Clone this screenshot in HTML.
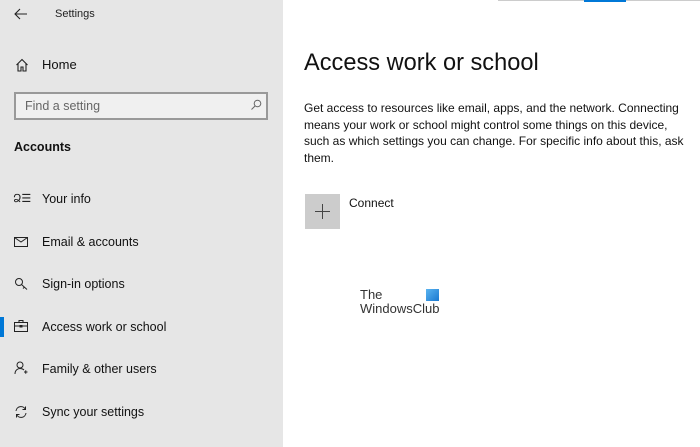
<!DOCTYPE html>
<html><head><style>
body{margin:0;width:700px;height:447px;overflow:hidden;background:#fff;font-family:"Liberation Sans",sans-serif;color:#000;position:relative}
.side{position:absolute;left:0;top:0;width:283px;height:447px;background:#e6e6e6}
.t{position:absolute;white-space:nowrap}
.it{position:absolute;left:42px;font-size:12.5px;color:#111}
svg{position:absolute}
</style></head><body>
<div class="side">
<svg style="left:14px;top:8px" width="14" height="12" viewBox="0 0 14 12"><path d="M13 6H1M6 1L1 6l5 5" fill="none" stroke="#222" stroke-width="1.1"/></svg>
<div class="t" style="left:55px;top:8px;font-size:11px;color:#222">Settings</div>
<svg style="left:15px;top:58px" width="14" height="14" viewBox="0 0 14 14"><path d="M1.5 7L7 1.5 12.5 7M3 5.5V13h3V9h2v4h3V5.5" fill="none" stroke="#222" stroke-width="1.1"/></svg>
<div class="it" style="top:57px;font-size:13px">Home</div>
<div style="position:absolute;left:14px;top:92px;width:250px;height:24px;border:2px solid #999;background:#f0f0f0"></div>
<div class="t" style="left:25px;top:99px;font-size:12.5px;color:#666">Find a setting</div>
<svg style="left:250px;top:99px" width="12" height="12" viewBox="0 0 12 12"><circle cx="7.5" cy="4.5" r="3.3" fill="none" stroke="#666"/><path d="M5 7L1.5 10.5" stroke="#666"/></svg>
<div class="t" style="left:14px;top:140px;font-size:12.5px;font-weight:bold;color:#111">Accounts</div>
<div class="t" style="left:13px;top:192px;font-size:11px;color:#222">Ձ☰</div>
<div class="it" style="top:192px">Your info</div>
<svg style="left:14px;top:237px" width="14" height="10" viewBox="0 0 14 10"><rect x=".5" y=".5" width="13" height="9" fill="none" stroke="#222"/><path d="M.5 .5L7 5l6.5-4.5" fill="none" stroke="#222"/></svg>
<div class="it" style="top:235px">Email &amp; accounts</div>
<svg style="left:14px;top:277px" width="14" height="14" viewBox="0 0 14 14"><circle cx="5" cy="5" r="3.5" fill="none" stroke="#222"/><path d="M7.5 7.5L13 12.5M10.5 10l-1.5 1.5" fill="none" stroke="#222"/></svg>
<div class="it" style="top:277px">Sign-in options</div>
<div style="position:absolute;left:0;top:317px;width:4px;height:20px;background:#0078d7"></div>
<svg style="left:14px;top:320px" width="14" height="12" viewBox="0 0 14 12"><rect x=".5" y="2.5" width="13" height="9" fill="none" stroke="#222"/><path d="M5 2.5V.5h4v2M.5 6h13M6 5.5h2v1.5H6z" fill="none" stroke="#222"/></svg>
<div class="it" style="top:320px">Access work or school</div>
<svg style="left:14px;top:361px" width="14" height="14" viewBox="0 0 14 14"><circle cx="6" cy="4" r="3" fill="none" stroke="#222"/><path d="M1 13c0-4 3-5.5 5-5.5s3 .5 4 1.5M10 11h3.5M11.75 9.3v3.5" fill="none" stroke="#222"/></svg>
<div class="it" style="top:362px">Family &amp; other users</div>
<svg style="left:14px;top:405px" width="14" height="14" viewBox="0 0 14 14"><path d="M2 6a5 5 0 0 1 9.5-1.5M12 8a5 5 0 0 1-9.5 1.5M11.5 1.5v3h-3M2.5 12.5v-3h3" fill="none" stroke="#222"/></svg>
<div class="it" style="top:405px">Sync your settings</div>
</div>
<div style="position:absolute;left:498px;top:0;width:202px;height:1px;background:#ccc"></div>
<div style="position:absolute;left:584px;top:0;width:42px;height:2px;background:#0078d7"></div>
<div class="t" style="left:304px;top:50px;font-size:23.6px;font-weight:300;color:#111">Access work or school</div>
<div class="t" style="left:304px;top:100px;font-size:12px;line-height:16.5px;color:#111">Get access to resources like email, apps, and the network. Connecting<br>means your work or school might control some things on this device,<br>such as which settings you can change. For specific info about this, ask<br>them.</div>
<div style="position:absolute;left:305px;top:194px;width:35px;height:35px;background:#ccc"></div>
<svg style="left:314px;top:203px" width="17" height="17" viewBox="0 0 17 17"><path d="M8.5 1v15M1 8.5h15" stroke="#444" stroke-width="1"/></svg>
<div class="t" style="left:349px;top:196px;font-size:12px;color:#111">Connect</div>
<div class="t" style="left:360px;top:288px;font-size:13px;line-height:14px;color:#333">The<br>WindowsClub</div>
<div style="position:absolute;left:426px;top:289px;width:13px;height:12px;background:linear-gradient(135deg,#5ab4f0,#1a78d0)"></div>
</body></html>
